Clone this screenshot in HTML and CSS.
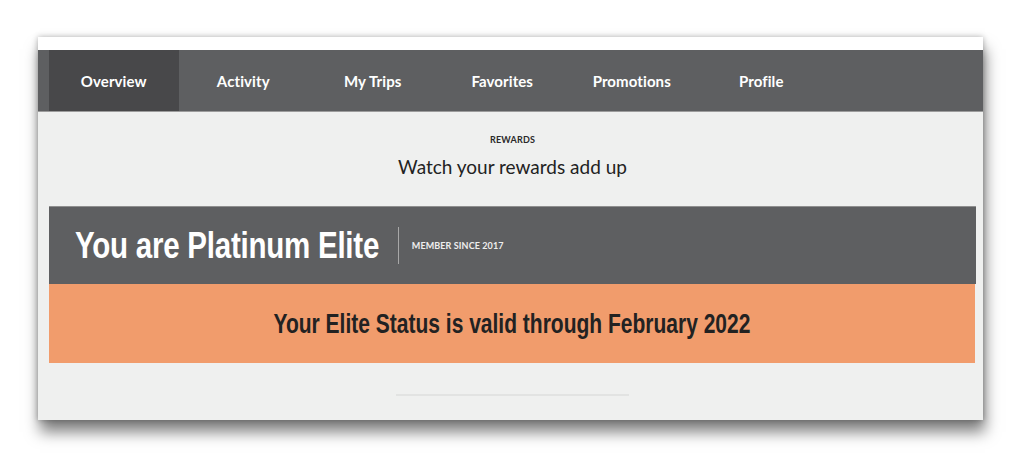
FILE: index.html
```html
<!DOCTYPE html>
<html>
<head>
<meta charset="utf-8">
<link rel="stylesheet" href="styles.css">
</head>
<body>
<div class="card">
  <div class="card-top"></div>
  <nav class="nav">
    <a class="nav-item active">Overview</a>
    <a class="nav-item">Activity</a>
    <a class="nav-item">My Trips</a>
    <a class="nav-item">Favorites</a>
    <a class="nav-item">Promotions</a>
    <a class="nav-item">Profile</a>
  </nav>
  <div class="content">
    <div class="intro">
      <div class="eyebrow">REWARDS</div>
      <div class="headline">Watch your rewards add up</div>
    </div>
    <div class="status">
      <div class="status-head">
        <h1 class="tier">You are Platinum Elite</h1>
        <span class="divider"></span>
        <span class="since">MEMBER SINCE 2017</span>
      </div>
      <div class="status-valid"><span class="valid-text">Your Elite Status is valid through February 2022</span></div>
    </div>
    <div class="rule"></div>
  </div>
</div>
</body>
</html>
```

FILE: styles.css
```css
html, body {
  margin: 0;
  padding: 0;
  background: #ffffff;
}
html {
  min-height: 100%;
}
body {
  padding: 37px 0 51px 38px;
  font-family: Lato, "Open Sans", sans-serif;
}
.card {
  width: 945px;
  height: 383px;
  background: #eff0ef;
  box-shadow: 2px 12px 14px rgba(0, 0, 0, 0.5), 0 0 6px rgba(0, 0, 0, 0.3);
  display: flex;
  flex-direction: column;
}
.card-top {
  height: 13px;
  background: #ffffff;
}
.nav {
  height: 62px;
  background: #5e5f61;
  display: flex;
  padding-left: 11px;
  border-bottom: 1px solid #9c9c9c;
  box-sizing: border-box;
}
.nav-item {
  width: 129.5px;
  display: flex;
  align-items: center;
  justify-content: center;
  color: #ffffff;
  font-weight: 700;
  font-size: 15px;
  letter-spacing: 0.1px;
}
.nav-item.active {
  background: #48484a;
}
.content {
  padding: 0 7px 0 11px;
  display: flex;
  flex-direction: column;
}
.intro {
  height: 94px;
  display: flex;
  flex-direction: column;
  align-items: center;
  padding-top: 22px;
  box-sizing: border-box;
}
.eyebrow {
  font-size: 9px;
  font-weight: 700;
  color: #2a2a2a;
  letter-spacing: 0.2px;
}
.headline {
  margin-top: 10px;
  font-size: 19px;
  font-weight: 400;
  color: #222222;
}
.status {
  display: flex;
  flex-direction: column;
}
.status-head {
  height: 78px;
  background: #5e5f61;
  display: flex;
  align-items: center;
  padding-left: 26px;
  border-top: 1px solid #8f8f8f;
  box-sizing: border-box;
}
.tier {
  margin: 0 -67px 0 0;
  font-family: "Liberation Sans", Arial, sans-serif;
  font-weight: 700;
  font-size: 36px;
  color: #ffffff;
  letter-spacing: -0.3px;
  transform: scaleX(0.82);
  transform-origin: left center;
}
.divider {
  width: 1px;
  height: 37px;
  background: #a8a8a8;
  margin: 0 13px 0 19px;
}
.since {
  font-size: 9px;
  font-weight: 700;
  color: #eeeeee;
  letter-spacing: 0.1px;
}
.status-valid {
  height: 79px;
  background: #f19c6c;
  display: flex;
  align-items: center;
  justify-content: center;
  margin-right: 1px;
}
.valid-text {
  display: inline-block;
  font-family: "Liberation Sans", Arial, sans-serif;
  font-weight: 700;
  font-size: 28px;
  color: #222222;
  transform: scaleX(0.75);
}
.rule {
  align-self: center;
  width: 233px;
  height: 2px;
  background: #e2e3e2;
  margin-top: 31px;
}
```
